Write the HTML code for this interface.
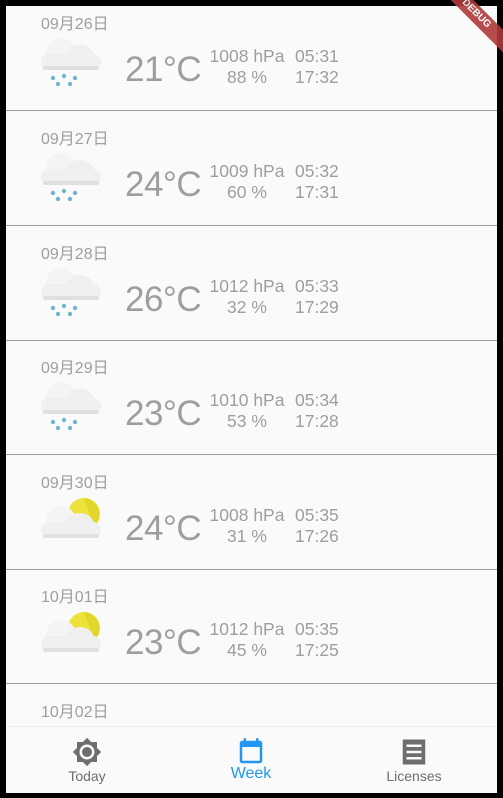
<!DOCTYPE html>
<html><head><meta charset="utf-8"><style>
*{margin:0;padding:0;box-sizing:border-box}
body{width:503px;height:798px;background:#000;overflow:hidden;position:relative;font-family:"Liberation Sans","Noto Sans CJK JP",sans-serif;color:#9e9e9e}
#screen{position:absolute;left:6px;top:6px;width:491px;height:787px;background:#fafafa;overflow:hidden}
.row{position:absolute;left:0;width:491px;height:115px;border-bottom:1px solid #9a9a9a}
.date{position:absolute;left:35px;top:19px;font-size:16px;line-height:19px}
.icon{position:absolute;left:33px;top:40px;width:64px;height:52px}
.temp{position:absolute;left:119px;top:54px;font-size:35px;line-height:40px;letter-spacing:-0.5px}
.p{position:absolute;left:198px;top:50px;width:86px;text-align:center;font-size:17.5px;line-height:21px}
.t{position:absolute;left:289px;top:50px;font-size:17.5px;line-height:21px}
#nav{position:absolute;left:0;top:720px;width:491px;height:67px;background:#fafafa;border-top:1px solid #eee}
.ni{position:absolute;top:0;width:120px;text-align:center}
.ni svg{position:absolute;top:10px}
.ni span{position:absolute;top:41px;left:0;width:120px;font-size:14px;color:#6e6e6e}
#ribbon{position:absolute;right:-28px;top:6px;width:110px;height:16px;background:#b03a3a;transform:rotate(45deg);color:#fff;font-size:10px;font-weight:bold;text-align:center;line-height:16px;opacity:.9}
</style></head><body>
<div id="screen">
<svg width="0" height="0" style="position:absolute">
<defs>
<g id="cloud"><ellipse cx="22" cy="17" rx="15" ry="15" fill="#f4f4f4"/><ellipse cx="41" cy="21" rx="14" ry="12" fill="#efefef"/><rect x="2" y="18" width="60" height="16" rx="8" fill="#f0f0f0"/><rect x="4" y="30" width="56" height="4" rx="2" fill="#e0e0e0"/></g>
<g id="rain" fill="#6fb7c9"><circle cx="14" cy="42" r="2.2"/><circle cx="25" cy="40" r="2.2"/><circle cx="36" cy="42" r="2.2"/><circle cx="19" cy="48" r="2.2"/><circle cx="31" cy="48" r="2.2"/></g>
<g id="sun"><circle cx="45" cy="19" r="16" fill="#ece23a"/><path d="M45 3a16 16 0 0 1 10 28z" fill="#e3d62a"/></g>
</defs></svg>
<div id="list" style="position:absolute;left:0;top:-10px;width:491px">
<div class="row" style="top:0"><div class="date">09月26日</div><svg class="icon" viewBox="0 0 64 52"><use href="#cloud"/><use href="#rain"/></svg><div class="temp">21°C</div><div class="p">1008 hPa<br>88 %</div><div class="t">05:31<br>17:32</div></div>
<div class="row" style="top:115px"><div class="date">09月27日</div><svg class="icon" viewBox="0 0 64 52"><use href="#cloud"/><use href="#rain"/></svg><div class="temp">24°C</div><div class="p">1009 hPa<br>60 %</div><div class="t">05:32<br>17:31</div></div>
<div class="row" style="top:230px"><div class="date">09月28日</div><svg class="icon" viewBox="0 0 64 52"><use href="#cloud"/><use href="#rain"/></svg><div class="temp">26°C</div><div class="p">1012 hPa<br>32 %</div><div class="t">05:33<br>17:29</div></div>
<div class="row" style="top:344px"><div class="date">09月29日</div><svg class="icon" viewBox="0 0 64 52"><use href="#cloud"/><use href="#rain"/></svg><div class="temp">23°C</div><div class="p">1010 hPa<br>53 %</div><div class="t">05:34<br>17:28</div></div>
<div class="row" style="top:459px"><div class="date">09月30日</div><svg class="icon" viewBox="0 0 64 52"><use href="#sun"/><use href="#cloud" transform="translate(0,9)"/></svg><div class="temp">24°C</div><div class="p">1008 hPa<br>31 %</div><div class="t">05:35<br>17:26</div></div>
<div class="row" style="top:573px"><div class="date">10月01日</div><svg class="icon" viewBox="0 0 64 52"><use href="#sun"/><use href="#cloud" transform="translate(0,9)"/></svg><div class="temp">23°C</div><div class="p">1012 hPa<br>45 %</div><div class="t">05:35<br>17:25</div></div>
<div class="row" style="top:688px"><div class="date">10月02日</div></div>
</div>
<div id="nav">
<div class="ni" style="left:21px"><svg style="left:45px" width="30" height="30" viewBox="0 0 24 24"><path fill="#6e6e6e" d="M20 8.69V4h-4.69L12 .69 8.69 4H4v4.69L.69 12 4 15.31V20h4.69L12 23.31 15.31 20H20v-4.69L23.31 12 20 8.69zM12 18a6 6 0 1 1 0-12 6 6 0 0 1 0 12zm0-10a4 4 0 1 0 0 8 4 4 0 0 0 0-8z"/></svg><span>Today</span></div>
<div class="ni" style="left:185px"><svg style="left:45px" width="30" height="30" viewBox="0 0 24 24"><path fill="#2196f3" d="M19 3h-1V1h-2v2H8V1H6v2H5a2 2 0 0 0-2 2v14a2 2 0 0 0 2 2h14a2 2 0 0 0 2-2V5a2 2 0 0 0-2-2zm0 16H5V8h14v11z"/></svg><span style="color:#2196f3;font-size:16px;top:38px">Week</span></div>
<div class="ni" style="left:348px"><svg style="left:45px" width="30" height="30" viewBox="0 0 24 24"><path fill="#6e6e6e" d="M3 2h18v20H3zM6 6v2h12V6zm0 5v2h12v-2zm0 5v2h12v-2z"/></svg><span>Licenses</span></div>
</div>
</div>
<div id="ribbon">DEBUG</div>
</body></html>
